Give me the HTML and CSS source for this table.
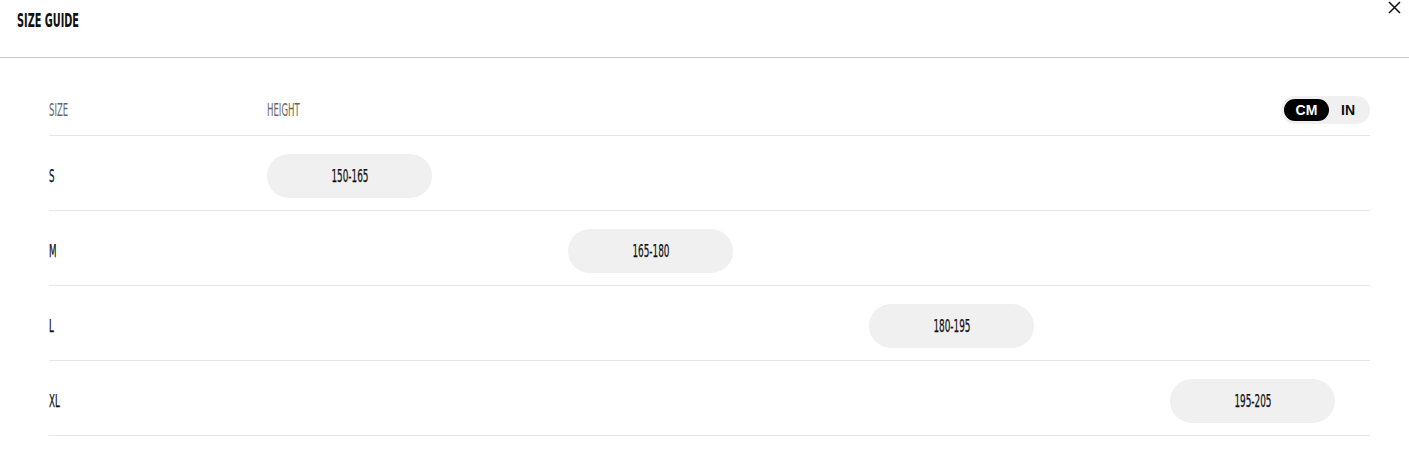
FILE: index.html
```html
<!DOCTYPE html>
<html lang="en">
<head>
<meta charset="utf-8">
<title>Size Guide</title>
<link rel="stylesheet" href="styles.css">
</head>
<body>
<div class="modal">
  <header class="modal-head">
    <h1 class="title"><span class="cond">SIZE GUIDE</span></h1>
    <button class="close" aria-label="Close">
      <svg width="13" height="13" viewBox="0 0 13 13"><path d="M1 1 L12 12 M12 1 L1 12" stroke="#111" stroke-width="1.5" fill="none"/></svg>
    </button>
  </header>
  <div class="table">
    <div class="row head-row">
      <div class="col-size"><span class="cond">SIZE</span></div>
      <div class="col-height"><span class="cond">HEIGHT</span></div>
      <div class="toggle">
        <span class="opt active">CM</span>
        <span class="opt">IN</span>
      </div>
    </div>
    <div class="row">
      <div class="col-size"><span class="cond">S</span></div>
      <div class="col-height bars"><span class="pill c1"><span class="cond">150-165</span></span></div>
    </div>
    <div class="row">
      <div class="col-size"><span class="cond">M</span></div>
      <div class="col-height bars"><span class="pill c2"><span class="cond">165-180</span></span></div>
    </div>
    <div class="row">
      <div class="col-size"><span class="cond">L</span></div>
      <div class="col-height bars"><span class="pill c3"><span class="cond">180-195</span></span></div>
    </div>
    <div class="row">
      <div class="col-size"><span class="cond">XL</span></div>
      <div class="col-height bars"><span class="pill c4"><span class="cond">195-205</span></span></div>
    </div>
  </div>
</div>
</body>
</html>
```
FILE: styles.css
```css
* { box-sizing: border-box; }
html, body { margin: 0; padding: 0; background: #fff; }
body { font-family: "Liberation Sans", Arial, sans-serif; color: #111; }

.cond {
  font-family: "DejaVu Sans Condensed", "DejaVu Sans", sans-serif;
  font-stretch: condensed;
  display: inline-block;
  transform: scaleX(0.57);
  transform-origin: left center;
}

.modal-head {
  height: 58px;
  border-bottom: 1px solid #c9c9c9;
  display: flex;
  justify-content: space-between;
  align-items: flex-start;
  padding: 0 8px 0 17px;
}
.title {
  margin: 0;
  padding-top: 9px;
  font-size: 19px;
  font-weight: 700;
  line-height: 22px;
  color: #111;
}
.title .cond { transform: scaleX(0.57); }
.close {
  border: 0;
  background: none;
  padding: 0;
  margin-top: 1px;
  width: 13px;
  height: 13px;
  cursor: pointer;
}
.close svg { display: block; }

.table {
  padding: 38px 39px 0 49px;
}
.row {
  display: flex;
  align-items: center;
  border-bottom: 1px solid #e6e6e6;
  padding: 18px 0 12px;
}
.head-row {
  padding: 0 0 11px;
}
.col-size {
  width: 218px;
  flex: none;
  font-size: 17px;
  line-height: 20px;
}
.col-size .cond { -webkit-text-stroke: 0.25px #111; }
.col-height {
  flex: 1;
  font-size: 17px;
  line-height: 20px;
}
.head-row .col-size, .head-row .col-height { color: #666; font-size: 17px; }
.head-row .cond { transform: scaleX(0.56); -webkit-text-stroke: 0; }

.toggle {
  display: flex;
  align-items: center;
  background: #f0f0f0;
  border-radius: 14px;
  height: 28px;
  padding: 3px;
  width: 89px;
  font-family: "Liberation Sans", Arial, sans-serif;
  font-weight: 700;
  font-size: 14px;
}
.opt {
  display: flex;
  align-items: center;
  justify-content: center;
  height: 22px;
  width: 45px;
  border-radius: 11px;
  color: #111;
}
.opt.active { background: #000; color: #fff; }
.opt + .opt { width: 38px; }

.bars {
  display: grid;
  grid-template-columns: repeat(4, 165px);
  column-gap: 136px;
}
.pill {
  height: 44px;
  border-radius: 22px;
  background: #f0f0f0;
  display: flex;
  align-items: center;
  justify-content: center;
  font-size: 17px;
  color: #111;
}
.pill .cond { transform: scaleX(0.58); transform-origin: center center; -webkit-text-stroke: 0.25px #111; }
.c1 { grid-column: 1; }
.c2 { grid-column: 2; }
.c3 { grid-column: 3; }
.c4 { grid-column: 4; }
```
